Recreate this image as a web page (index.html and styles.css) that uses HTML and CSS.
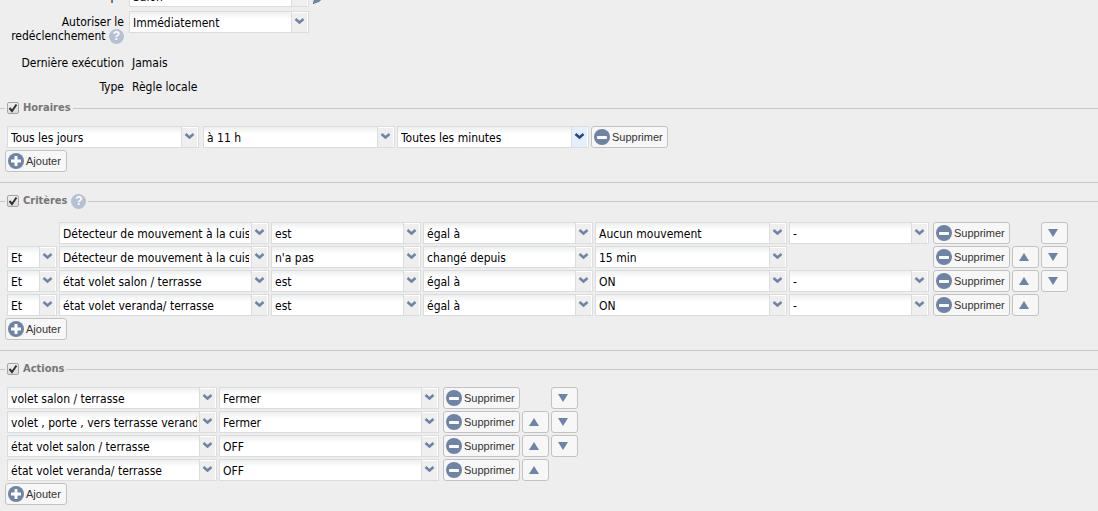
FILE: index.html
```html
<!DOCTYPE html>
<html lang="fr">

<head>
    <meta charset="UTF-8">
    <meta name="viewport" content="width=device-width, initial-scale=1.0">
    <title>Règle</title>
    <link rel="stylesheet" href="styles.css">
</head>

<body>
    <svg class="defs" width="0" height="0" aria-hidden="true">
        <symbol id="minus" viewBox="0 0 16 16">
            <circle cx="8" cy="8" r="8" fill="#6d84a6" />
            <rect x="3" y="7" width="10" height="3" rx="1" fill="#fff" />
        </symbol>
        <symbol id="plus" viewBox="0 0 16 16">
            <circle cx="8" cy="8" r="8" fill="#6d84a6" />
            <path d="M7 3h2q.5 0 .5.5v3h3q.5 0 .5.5v2q0 .5-.5.5h-3v3q0 .5-.5.5h-2q-.5 0-.5-.5v-3h-3q-.5 0-.5-.5v-2q0-.5.5-.5h3v-3q0-.5.5-.5z" fill="#fff" />
        </symbol>
        <symbol id="up" viewBox="0 0 10 8">
            <path d="M5 0L10 8H0z" fill="#6d84a6" />
        </symbol>
        <symbol id="down" viewBox="0 0 10 8">
            <path d="M0 0H10L5 8z" fill="#6d84a6" />
        </symbol>
    </svg>

    <form>
        <div class="form">
            <label for="groupe">Groupe</label>
            <div class="field">
                <select id="groupe"><option>Salon</option></select>
                <button type="button" class="edit" aria-label="Modifier">
                    <svg width="16" height="16" viewBox="0 0 16 16">
                        <path d="M0 16l1-6L11 0l5 5L6 14z" fill="#6d84a6" />
                        <path d="M0 16l.3-1.500 1.200 1z" fill="#3d5680" />
                    </svg>
                </button>
            </div>
            <label for="redec" class="two">Autoriser le redéclenchement <span class="help">?</span></label>
            <div class="field">
                <select id="redec"><option>Immédiatement</option></select>
            </div>
            <span class="name">Dernière exécution</span>
            <span class="value">Jamais</span>
            <span class="name">Type</span>
            <span class="value">Règle locale</span>
        </div>

        <fieldset>
            <legend><label><input type="checkbox" checked>Horaires</label></legend>
            <div class="row horaires">
                <select aria-label="Jour"><option>Tous les jours</option></select>
                <select aria-label="Heure"><option>à 11 h</option></select>
                <select aria-label="Minute" class="hover"><option>Toutes les minutes</option></select>
                <button type="button" class="del"><svg><use href="#minus" /></svg>Supprimer</button>
            </div>
            <button type="button" class="add"><svg><use href="#plus" /></svg>Ajouter</button>
        </fieldset>

        <fieldset class="with-help">
            <legend><label><input type="checkbox" checked>Critères</label> <span class="help">?</span></legend>
            <div class="row criteres">
                <select aria-label="Objet" class="c2"><option>Détecteur de mouvement à la cuisine</option></select>
                <select aria-label="Verbe"><option>est</option></select>
                <select aria-label="Comparaison"><option>égal à</option></select>
                <select aria-label="Valeur"><option>Aucun mouvement</option></select>
                <select aria-label="Durée" class="c6"><option>-</option></select>
                <button type="button" class="del"><svg><use href="#minus" /></svg>Supprimer</button>
                <button type="button" class="down" aria-label="Descendre"><svg><use href="#down" /></svg></button>
            </div>
            <div class="row criteres">
                <select aria-label="Opérateur"><option>Et</option></select>
                <select aria-label="Objet"><option>Détecteur de mouvement à la cuisine</option></select>
                <select aria-label="Verbe"><option>n'a pas</option></select>
                <select aria-label="Comparaison"><option>changé depuis</option></select>
                <select aria-label="Valeur"><option>15 min</option></select>
                <button type="button" class="del"><svg><use href="#minus" /></svg>Supprimer</button>
                <button type="button" class="up" aria-label="Monter"><svg><use href="#up" /></svg></button>
                <button type="button" class="down" aria-label="Descendre"><svg><use href="#down" /></svg></button>
            </div>
            <div class="row criteres">
                <select aria-label="Opérateur"><option>Et</option></select>
                <select aria-label="Objet"><option>état volet salon / terrasse</option></select>
                <select aria-label="Verbe"><option>est</option></select>
                <select aria-label="Comparaison"><option>égal à</option></select>
                <select aria-label="Valeur"><option>ON</option></select>
                <select aria-label="Durée" class="c6"><option>-</option></select>
                <button type="button" class="del"><svg><use href="#minus" /></svg>Supprimer</button>
                <button type="button" class="up" aria-label="Monter"><svg><use href="#up" /></svg></button>
                <button type="button" class="down" aria-label="Descendre"><svg><use href="#down" /></svg></button>
            </div>
            <div class="row criteres">
                <select aria-label="Opérateur"><option>Et</option></select>
                <select aria-label="Objet"><option>état volet veranda/ terrasse</option></select>
                <select aria-label="Verbe"><option>est</option></select>
                <select aria-label="Comparaison"><option>égal à</option></select>
                <select aria-label="Valeur"><option>ON</option></select>
                <select aria-label="Durée" class="c6"><option>-</option></select>
                <button type="button" class="del"><svg><use href="#minus" /></svg>Supprimer</button>
                <button type="button" class="up" aria-label="Monter"><svg><use href="#up" /></svg></button>
            </div>
            <button type="button" class="add"><svg><use href="#plus" /></svg>Ajouter</button>
        </fieldset>

        <fieldset class="last">
            <legend><label><input type="checkbox" checked>Actions</label></legend>
            <div class="row actions">
                <select aria-label="Objet"><option>volet salon / terrasse</option></select>
                <select aria-label="Action"><option>Fermer</option></select>
                <button type="button" class="del"><svg><use href="#minus" /></svg>Supprimer</button>
                <button type="button" class="down" aria-label="Descendre"><svg><use href="#down" /></svg></button>
            </div>
            <div class="row actions">
                <select aria-label="Objet"><option>volet , porte , vers terrasse veranda</option></select>
                <select aria-label="Action"><option>Fermer</option></select>
                <button type="button" class="del"><svg><use href="#minus" /></svg>Supprimer</button>
                <button type="button" class="up" aria-label="Monter"><svg><use href="#up" /></svg></button>
                <button type="button" class="down" aria-label="Descendre"><svg><use href="#down" /></svg></button>
            </div>
            <div class="row actions">
                <select aria-label="Objet"><option>état volet salon / terrasse</option></select>
                <select aria-label="Action"><option>OFF</option></select>
                <button type="button" class="del"><svg><use href="#minus" /></svg>Supprimer</button>
                <button type="button" class="up" aria-label="Monter"><svg><use href="#up" /></svg></button>
                <button type="button" class="down" aria-label="Descendre"><svg><use href="#down" /></svg></button>
            </div>
            <div class="row actions">
                <select aria-label="Objet"><option>état volet veranda/ terrasse</option></select>
                <select aria-label="Action"><option>OFF</option></select>
                <button type="button" class="del"><svg><use href="#minus" /></svg>Supprimer</button>
                <button type="button" class="up" aria-label="Monter"><svg><use href="#up" /></svg></button>
            </div>
            <button type="button" class="add"><svg><use href="#plus" /></svg>Ajouter</button>
        </fieldset>
    </form>
</body>

</html>
```
FILE: styles.css
```css
* {
    box-sizing: border-box;
}

body {
    margin: 0;
    background-color: #eee;
    color: #000;
    font: 12px/14px "DejaVu Sans Condensed", Tahoma, sans-serif;
    overflow: hidden;
}

.defs {
    display: block;
}

/* the form starts scrolled a little under the top edge */
.form {
    display: grid;
    grid-template-columns: 124px 1fr;
    column-gap: 5px;
    row-gap: 10px;
    margin-top: -15px;
}

.form label,
.form .name {
    text-align: right;
}

.form label {
    padding-top: 4px;
}

.form .two {
    margin-top: -6px;
    padding-bottom: 3px;
}

.form .two + .field {
    margin-top: -6px;
}

.form .value {
    padding-left: 3px;
}

.field {
    display: flex;
    gap: 4px;
    height: 22px;
}

.field select {
    width: 180px;
}

.edit {
    display: flex;
    align-items: center;
    width: 16px;
    border: 0;
    padding: 0;
    background: none;
}

.edit svg {
    flex: none;
}

.help {
    display: inline-block;
    width: 15px;
    height: 15px;
    border-radius: 50%;
    background-color: #b5c1d3;
    color: #fff;
    font: bold 12px/15px "Liberation Sans", Arial, sans-serif;
    text-align: center;
}

.form .help {
    margin: -2px 0;
    vertical-align: middle;
}

fieldset {
    min-width: 0;
    margin: 10px 0 0;
    border: 0 solid #c8c8c8;
    border-width: 1px 0;
    padding: 10px 5px;
}

.form + fieldset {
    margin-top: 6px;
}

fieldset.with-help {
    padding-top: 13px;
}

fieldset.last {
    border-bottom: 0;
}

legend {
    display: flex;
    align-items: center;
    gap: 4px;
    height: 16px;
    padding: 0 2px;
    color: #777;
    font-size: 11px;
    font-weight: bold;
}

legend label {
    display: flex;
    align-items: center;
    gap: 4px;
}

input[type="checkbox"] {
    appearance: none;
    width: 12px;
    height: 12px;
    margin: 0;
    border: 1px solid #a5a5a5;
    border-radius: 2px;
    background: linear-gradient(#f0f0f0, #dcdcdc);
}

input[type="checkbox"]:checked {
    background: url("data:image/svg+xml,%3Csvg xmlns='http://www.w3.org/2000/svg' width='10' height='10'%3E%3Cpath d='M1.5 5l2.500 3 4.500-6.500' fill='none' stroke='%23333' stroke-width='2'/%3E%3C/svg%3E") center no-repeat, linear-gradient(#f0f0f0, #dcdcdc);
}

.row {
    display: grid;
    gap: 2px;
    height: 22px;
    margin: 0 2px 2px;
}

.horaires {
    grid-template-columns: 194px 192px 192px 77px;
}

.criteres {
    grid-template-columns: 50px 210px 150px 170px 192px 142px 77px 27px 27px;
}

.actions {
    grid-template-columns: 210px 222px 77px 27px 27px;
}

.c2 {
    grid-column: 2;
}

.criteres .del {
    grid-column: 7;
}

.criteres .up {
    grid-column: 8;
}

.criteres .down {
    grid-column: 9;
}

.actions .up {
    grid-column: 4;
}

.actions .down {
    grid-column: 5;
}

.horaires select:first-child,
.criteres .c6,
.actions select:nth-child(2) {
    margin-right: 2px;
}

select {
    appearance: none;
    min-width: 0;
    height: 22px;
    border: 1px solid #dadcdd;
    border-radius: 0;
    padding: 2px 19px 0 3px;
    color: #000;
    font: inherit;
    background:
        url("data:image/svg+xml,%3Csvg xmlns='http://www.w3.org/2000/svg' width='17' height='20'%3E%3Cpath d='M0 0h17v20H0z' fill='%23efefef'/%3E%3Cpath d='M0 0h1v20H0z' fill='%23dadcdd'/%3E%3Cpath d='M1 0h16v20h-1V1H1z' fill='%23fff'/%3E%3Cpath d='M4.500 7l4 3.500 4-3.500' fill='none' stroke='%236d84a6' stroke-width='2.500'/%3E%3C/svg%3E") right top no-repeat padding-box,
        linear-gradient(#edf0f0, #fff 7px);
}

select.hover {
    background:
        url("data:image/svg+xml,%3Csvg xmlns='http://www.w3.org/2000/svg' width='17' height='20'%3E%3Cpath d='M0 0h17v20H0z' fill='%23e3f1ff'/%3E%3Cpath d='M0 0h1v20H0z' fill='%23dadcdd'/%3E%3Cpath d='M16 0h1v20h-1z' fill='%23fff'/%3E%3Cpath d='M4.500 7l4 3.500 4-3.500' fill='none' stroke='%23284487' stroke-width='2.500'/%3E%3C/svg%3E") right top no-repeat padding-box,
        linear-gradient(#edf0f0, #fff 7px);
}

.del,
.add,
.up,
.down {
    display: flex;
    align-items: center;
    gap: 2px;
    height: 22px;
    border: 1px solid #c2c2c2;
    border-radius: 3px;
    padding: 0 5px 0 2px;
    background-color: #f7f7f7;
    color: #333;
    font: 11px/14px "Liberation Sans", Arial, sans-serif;
}

.del svg,
.add svg {
    flex: none;
    width: 16px;
    height: 16px;
}

.up,
.down {
    justify-content: center;
    padding: 0 4px 0 0;
}

.up svg,
.down svg {
    width: 10px;
    height: 8px;
}
```
